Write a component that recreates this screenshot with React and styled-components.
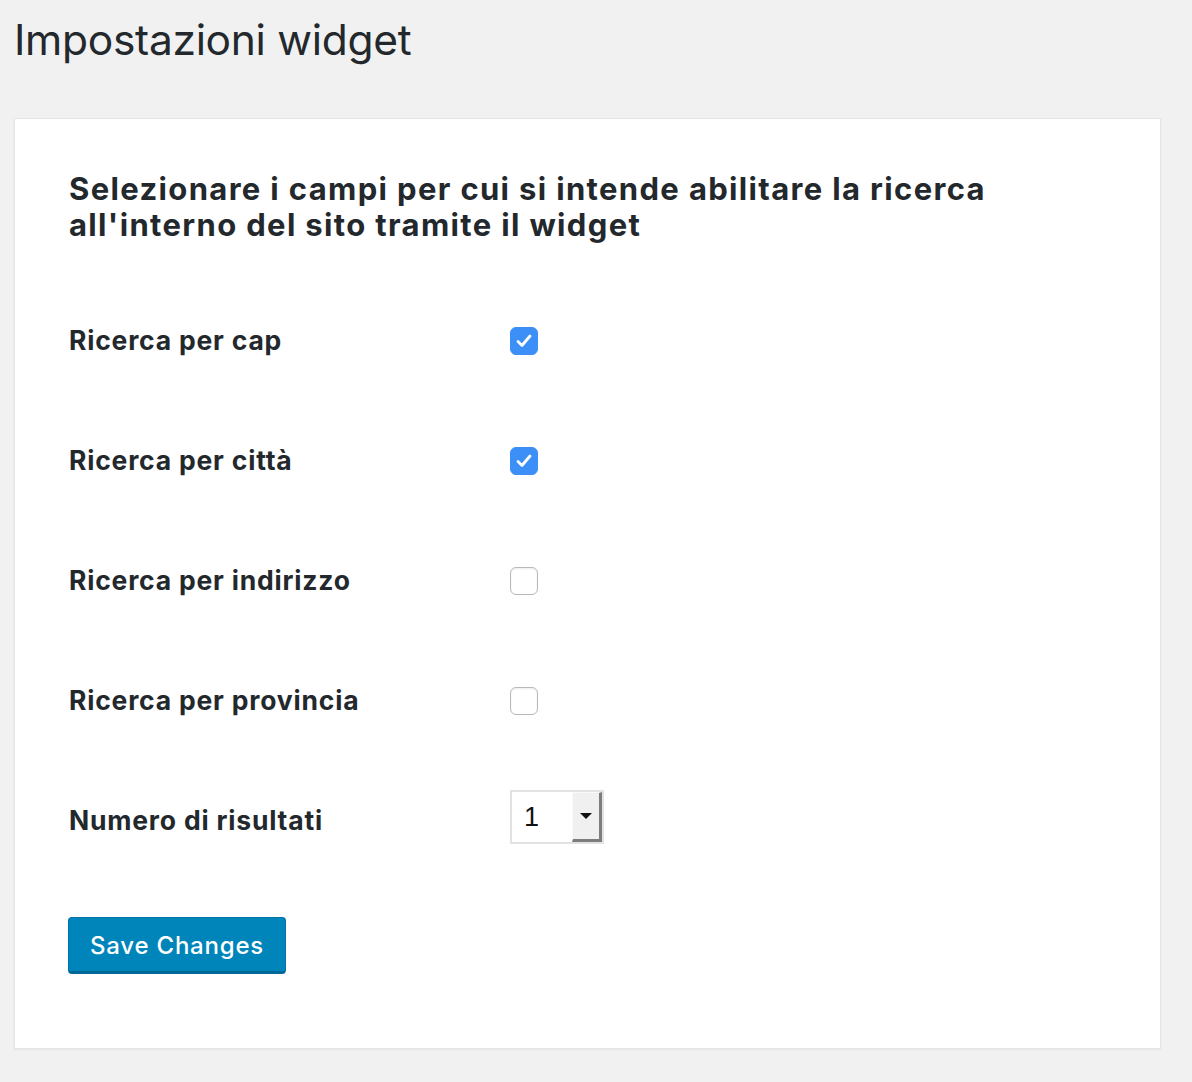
import React from 'react';
import styled, { createGlobalStyle } from 'styled-components';

const GlobalStyle = createGlobalStyle`
  html, body {
    margin: 0;
    padding: 0;
    background: #f1f1f1;
  }
  body {
    font-family: Inter, "Noto Sans", "Liberation Sans", sans-serif;
    color: #23282d;
  }
`;

const Page = styled.div`
  padding: 14px 31px 34px 14px;
  min-height: 1082px;
  box-sizing: border-box;
`;

const PageTitle = styled.h1`
  margin: 0 0 52px 0;
  font-size: 42.5px;
  line-height: 52px;
  font-weight: 400;
  letter-spacing: -0.3px;
  color: #23282d;
`;

const Card = styled.div`
  background: #fff;
  border: 1px solid #e5e5e5;
  box-shadow: 0 1px 2px rgba(0, 0, 0, 0.05);
  padding: 52px 54px 74px 54px;
`;

const SectionTitle = styled.h2`
  margin: 0 0 38px 0;
  font-size: 31px;
  line-height: 36px;
  font-weight: 700;
  letter-spacing: 1.35px;
  color: #23282d;
  max-width: 960px;
`;

const FieldRow = styled.div`
  display: grid;
  grid-template-columns: 441px 1fr;
  align-items: center;
  height: 120px;
`;

const FieldLabel = styled.label`
  font-size: 26.5px;
  font-weight: 700;
  letter-spacing: 0.8px;
  color: #23282d;
  margin-bottom: 3px;
`;

const CheckBox = styled.span`
  display: flex;
  align-items: center;
  justify-content: center;
  width: 28px;
  height: 28px;
  box-sizing: border-box;
  border-radius: 6px;
  background: ${p => (p.$checked ? '#3c8ff6' : '#fff')};
  border: 1px solid ${p => (p.$checked ? '#3c8ff6' : '#b8b8b8')};
  box-shadow: ${p => (p.$checked ? 'none' : 'inset 0 1px 2px rgba(0,0,0,0.08)')};
`;

const SelectBox = styled.div`
  display: flex;
  width: 94px;
  height: 54px;
  margin-bottom: 8px;
  box-sizing: border-box;
  border: 2px solid #e2e2e2;
  background: #fff;
`;

const SelectValue = styled.div`
  flex: 1;
  display: flex;
  align-items: center;
  padding-left: 12px;
  font-size: 27px;
  font-family: "Liberation Sans", Arial, sans-serif;
  color: #111;
`;

const SelectArrow = styled.div`
  width: 30px;
  display: flex;
  align-items: center;
  justify-content: center;
  background: #f0f0f0;
  box-sizing: border-box;
  border-top: 1px solid #fafafa;
  border-left: 1px solid #fafafa;
  border-right: 3px solid #7d7d7d;
  border-bottom: 3px solid #7d7d7d;
`;

const ArrowGlyph = styled.span`
  width: 0;
  height: 0;
  border-left: 6px solid transparent;
  border-right: 6px solid transparent;
  border-top: 6px solid #111;
`;

const SaveButton = styled.button`
  margin-top: 36px;
  margin-left: -1px;
  width: 218px;
  height: 57px;
  background: #0085ba;
  border: 1px solid #0073aa;
  border-bottom: 3px solid #006799;
  border-radius: 4px;
  color: #fff;
  font-family: Inter, "Noto Sans", "Liberation Sans", sans-serif;
  font-size: 24px;
  font-weight: 500;
  letter-spacing: 0.8px;
  padding: 2px 0 0 0;
  cursor: pointer;
`;

const fields = [
  { label: 'Ricerca per cap', checked: true },
  { label: 'Ricerca per città', checked: true },
  { label: 'Ricerca per indirizzo', checked: false },
  { label: 'Ricerca per provincia', checked: false },
];

function Check({ checked }) {
  return (
    <CheckBox $checked={checked}>
      {checked && (
        <svg width="22" height="22" viewBox="0 0 22 22">
          <path d="M5 11.5 L9 15.5 L17 6" fill="none" stroke="#fff" strokeWidth="2.8" strokeLinecap="round" strokeLinejoin="round" />
        </svg>
      )}
    </CheckBox>
  );
}

export default function App() {
  return (
    <Page>
      <GlobalStyle />
      <PageTitle>Impostazioni widget</PageTitle>
      <Card>
        <SectionTitle>
          Selezionare i campi per cui si intende abilitare la ricerca all'interno del sito tramite il widget
        </SectionTitle>
        {fields.map(f => (
          <FieldRow key={f.label}>
            <FieldLabel>{f.label}</FieldLabel>
            <Check checked={f.checked} />
          </FieldRow>
        ))}
        <FieldRow>
          <FieldLabel>Numero di risultati</FieldLabel>
          <SelectBox>
            <SelectValue>1</SelectValue>
            <SelectArrow>
              <ArrowGlyph />
            </SelectArrow>
          </SelectBox>
        </FieldRow>
        <SaveButton>Save Changes</SaveButton>
      </Card>
    </Page>
  );
}
